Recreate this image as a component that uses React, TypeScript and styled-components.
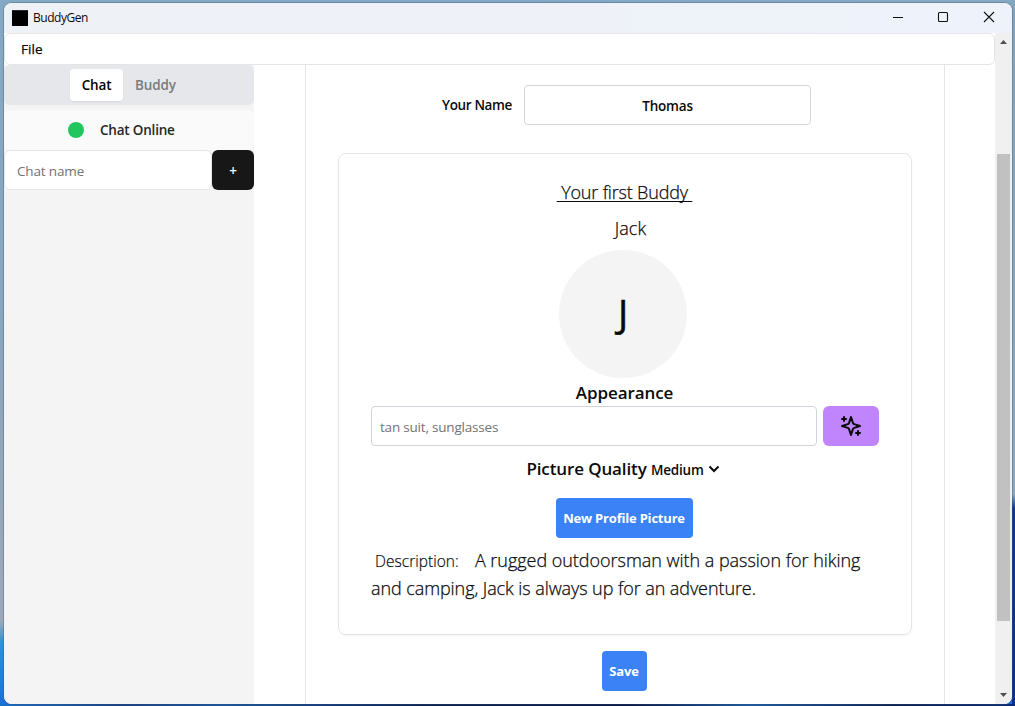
import React from "react";
import styled, { createGlobalStyle } from "styled-components";

const GlobalStyle = createGlobalStyle`
  * { box-sizing: border-box; }
  html, body, #root { height: 100%; margin: 0; }
  body { overflow: hidden; font-family: "Open Sans", "Noto Sans", sans-serif; color: #0a0a0a; }
  button, input { font-family: inherit; margin: 0; }
`;

const Desktop = styled.div`
  height: 706px;
  width: 1015px;
  padding: 3px 3px 2px 4px;
  background:
    linear-gradient(90deg, #1a70cd 0, #173f8c 12%, #1956a5 22%, #0a1f52 42%, #071745 62%, #1c5bab 74%, #0a1e50 88%, #0b2a7a 100%) 0 704px / 100% 2px no-repeat,
    linear-gradient(180deg, #80a5bf 0, #87a9c3 70%, #0b3a92 72%, #063192 100%) 1012px 0 / 3px 100% no-repeat,
    linear-gradient(180deg, #84a9c4 0, #8aa6bf 50%, #9aa8b9 80%, #9ba9bb 88%, #2d92d6 91%, #1b6fd8 100%);
`;

const Window = styled.div`
  height: 701px;
  display: flex;
  flex-direction: column;
  border-radius: 8px;
  overflow: hidden;
  background: #fff;
  box-shadow: 0 0 0 1px rgba(60, 80, 100, 0.35);
`;

const TitleBar = styled.header`
  height: 30px;
  flex: none;
  display: flex;
  align-items: center;
  background: linear-gradient(90deg, #eef1f6, #eef2fa);
  padding-left: 8px;
`;

const AppIcon = styled.div`
  width: 16px;
  height: 16px;
  background: #000;
  border-top: 1px solid #2a2735;
  margin-right: 5px;
`;

const WindowControls = styled.div`
  margin-left: auto;
  display: flex;
  svg { display: block; }
`;

const Body = styled.div`
  flex: 1;
  min-height: 0;
  display: flex;
`;

const Page = styled.div`
  flex: 1;
  display: flex;
  flex-direction: column;
`;

const Label = styled.span<{ $size: number; $weight?: number; $spacing?: number; $color?: string; $line?: number; $stroke?: number }>`
  font-size: ${(p) => p.$size}px;
  font-weight: ${(p) => p.$weight ?? 400};
  letter-spacing: ${(p) => p.$spacing ?? 0}px;
  color: ${(p) => p.$color ?? "inherit"};
  line-height: ${(p) => (p.$line ? `${p.$line}px` : "20px")};
  -webkit-text-stroke: ${(p) => p.$stroke ?? 0}px currentColor;
  white-space: pre;
`;

const MenuBar = styled.nav`
  height: 32px;
  flex: none;
  display: flex;
  align-items: center;
  padding-left: 16px;
  border: 1px solid #e5e5e5;
  border-radius: 6px;
`;

const Columns = styled.div`
  flex: 1;
  min-height: 0;
  display: flex;
`;

const Sidebar = styled.aside`
  width: 250px;
  background: #f4f4f4;
`;

const TabList = styled.div`
  height: 40px;
  display: flex;
  justify-content: center;
  align-items: center;
  border-radius: 6px;
  background: #e5e7eb;
`;

const Tab = styled.button<{ $active?: boolean; $width: number }>`
  width: ${(p) => p.$width}px;
  height: 32px;
  padding: 0;
  border: 0;
  border-radius: 4px;
  background: ${(p) => (p.$active ? "#fff" : "transparent")};
  box-shadow: ${(p) => (p.$active ? "0 1px 2px rgba(0,0,0,0.06)" : "none")};
`;

const Status = styled.div`
  height: 40px;
  margin-top: 5px;
  display: flex;
  align-items: center;
  padding-left: 64px;
  gap: 16px;
  border-radius: 6px;
  background: #fafafa;
`;

const Dot = styled.div`
  width: 16px;
  height: 16px;
  border-radius: 50%;
  background: #22c55e;
`;

const NewChat = styled.div`
  display: flex;
`;

const TextInput = styled.input<{ $pad: number; $radius: number; $border: string; $spacing: number; $center?: boolean }>`
  flex: 1;
  min-width: 0;
  height: 40px;
  padding: 2px ${(p) => p.$pad}px 0;
  border: 1px solid ${(p) => p.$border};
  border-radius: ${(p) => p.$radius}px;
  background: #fff;
  outline: none;
  color: #0a0a0a;
  font-size: 13.5px;
  font-weight: ${(p) => (p.$center ? 600 : 400)};
  letter-spacing: ${(p) => p.$spacing}px;
  text-align: ${(p) => (p.$center ? "center" : "left")};
  &::placeholder { color: #737373; opacity: 1; }
`;

const AddButton = styled.button`
  width: 42px;
  height: 40px;
  padding: 2px 0 0;
  border: 0;
  border-radius: 6px;
  background: #171717;
  color: #fff;
`;

const Main = styled.main`
  flex: 1;
  padding: 0 50px 0 51px;
`;

const Panel = styled.section`
  width: 640px;
  height: 100%;
  border: solid #e5e5e5;
  border-width: 0 1px;
  padding: 20px 32px 0;
`;

const NameRow = styled.label`
  display: flex;
  align-items: center;
  width: 369px;
  margin-left: 104px;
  gap: 12px;
`;

const Card = styled.article`
  height: 482px;
  margin-top: 28px;
  padding: 24px 32px 0;
  border: 1px solid #e5e5e5;
  border-radius: 8px;
  box-shadow: 0 1px 2px rgba(0, 0, 0, 0.05);
  display: flex;
  flex-direction: column;
  align-items: center;
`;

const BuddyTitle = styled.div`
  height: 28px;
  display: flex;
  margin-right: 1px;
  text-decoration: underline;
  text-decoration-thickness: 1px;
  text-underline-offset: 2px;
  text-decoration-skip-ink: none;
`;

const BuddyName = styled.div`
  height: 28px;
  margin: 8px 0;
  padding-left: 11px;
`;

const Avatar = styled.div`
  width: 128px;
  height: 128px;
  flex: none;
  margin-right: 4px;
  padding-bottom: 3px;
  border-radius: 50%;
  background: #f4f4f4;
  display: flex;
  align-items: center;
  justify-content: center;
`;

const AppearanceLabel = styled.div`
  height: 28px;
  padding-top: 1px;
  margin-right: 1px;
`;

const AppearanceRow = styled.div`
  width: 508px;
  display: flex;
  gap: 6px;
`;

const MagicButton = styled.button`
  width: 56px;
  height: 40px;
  padding: 0;
  border: 0;
  border-radius: 6px;
  background: #c084fc;
  display: flex;
  align-items: center;
  justify-content: center;
`;

const QualityRow = styled.div`
  height: 28px;
  margin: 9px 0 15px;
  display: flex;
  align-items: baseline;
  svg { align-self: center; }
`;

const PrimaryButton = styled.button<{ $width: number }>`
  width: ${(p) => p.$width}px;
  height: 40px;
  flex: none;
  margin-right: 2px;
  padding: 0;
  border: 0;
  border-radius: 4px;
  background: #3b82f6;
  color: #fff;
`;

const Description = styled.div`
  width: 508px;
  margin-top: 8px;
  display: flex;
  flex-direction: column;
`;

const DescriptionLine = styled.div`
  height: 28px;
  display: flex;
  align-items: baseline;
`;

const SaveRow = styled.div`
  margin-top: 16px;
  display: flex;
  justify-content: center;
`;

const ScrollBar = styled.div`
  width: 17px;
  background: #f0f0f0;
  display: flex;
  flex-direction: column;
  align-items: center;
  svg { display: block; flex: none; }
`;

const Thumb = styled.div`
  width: 13px;
  height: 467px;
  margin-top: 104px;
  margin-bottom: auto;
  background: #c1c1c1;
`;

const Controls = () => (
  <WindowControls>
    <svg width="126" height="30" viewBox="0 0 126 30" fill="none" stroke="#111" strokeWidth="1.1">
      <path d="M7 14.5h10" />
      <rect x="52.5" y="9.5" width="9" height="9" rx="1" />
      <path d="M98 9l10 10M108 9l-10 10" />
    </svg>
  </WindowControls>
);

const Sparkles = () => (
  <svg width="24" height="24" viewBox="0 0 24 24" fill="none" stroke="#0a0a0a" strokeWidth="2" strokeLinecap="round" strokeLinejoin="round">
    <path d="m12 3-1.912 5.813a2 2 0 0 1-1.275 1.275L3 12l5.813 1.912a2 2 0 0 1 1.275 1.275L12 21l1.912-5.813a2 2 0 0 1 1.275-1.275L21 12l-5.813-1.912a2 2 0 0 1-1.275-1.275L12 3Z" />
    <path d="M5 3v4M19 17v4M3 5h4M17 19h4" />
  </svg>
);

const Arrow = ({ down }: { down?: boolean }) => (
  <svg width="17" height="17" viewBox="0 0 17 17" fill="#505050">
    <path d={down ? "M5 6h7L8.5 10z" : "M5 11h7L8.5 7z"} />
  </svg>
);

export default function App() {
  return (
    <Desktop>
      <GlobalStyle />
      <Window>
        <TitleBar>
          <AppIcon />
          <Label $size={12} $spacing={-0.45}>BuddyGen</Label>
          <Controls />
        </TitleBar>
        <Body>
          <Page>
            <MenuBar>
              <Label $size={13.5} $stroke={0.25} $spacing={0.1}>File</Label>
            </MenuBar>
            <Columns>
              <Sidebar>
                <TabList>
                  <Tab $active $width={53}><Label $size={13.5} $weight={600} $spacing={-0.15}>Chat</Label></Tab>
                  <Tab $width={65}><Label $size={13.5} $weight={600} $spacing={-0.15} $color="#7b7b7d">Buddy</Label></Tab>
                </TabList>
                <Status>
                  <Dot />
                  <Label $size={13.5} $weight={600} $spacing={-0.2} $color="#262626">Chat Online</Label>
                </Status>
                <NewChat>
                  <TextInput placeholder="Chat name" $pad={12} $radius={6} $border="#e5e5e5" $spacing={-0.15} />
                  <AddButton><Label $size={13.5} $weight={600}>+</Label></AddButton>
                </NewChat>
              </Sidebar>
              <Main>
                <Panel>
                  <NameRow>
                    <Label $size={13.5} $weight={600} $spacing={-0.35}>Your Name</Label>
                    <TextInput defaultValue="Thomas" $center $pad={8} $radius={4} $border="#d1d5db" $spacing={-0.2} />
                  </NameRow>
                  <Card>
                    <BuddyTitle><Label $size={18} $weight={300} $stroke={0.25} $spacing={-0.18} $line={28}>{" Your first Buddy "}</Label></BuddyTitle>
                    <BuddyName><Label $size={18} $weight={300} $stroke={0.25} $spacing={0.1} $line={28}>Jack</Label></BuddyName>
                    <Avatar><Label $size={38} $stroke={0.5} $line={48}>J</Label></Avatar>
                    <AppearanceLabel><Label $size={17} $weight={600} $spacing={-0.08} $line={28}>Appearance</Label></AppearanceLabel>
                    <AppearanceRow>
                      <TextInput placeholder="tan suit, sunglasses" $pad={8} $radius={4} $border="#d1d5db" $spacing={-0.2} />
                      <MagicButton aria-label="Enhance"><Sparkles /></MagicButton>
                    </AppearanceRow>
                    <QualityRow>
                      <Label $size={17} $weight={600} $spacing={-0.12} $line={28}>{"Picture Quality "}</Label>
                      <Label $size={13.5} $weight={600} $spacing={-0.2} $line={28}>Medium</Label>
                      <svg width="20" height="16" viewBox="0 0 20 16" fill="none" stroke="#0a0a0a" strokeWidth="2">
                        <path d="M5.500 5.500 10 10l4.500-4.500" />
                      </svg>
                    </QualityRow>
                    <PrimaryButton $width={137}><Label $size={13} $weight={700} $spacing={-0.2}>New Profile Picture</Label></PrimaryButton>
                    <Description>
                      <DescriptionLine>
                        <Label $size={15.5} $weight={300} $stroke={0.2} $spacing={0.02} $line={28}>{" Description:    "}</Label>
                        <Label $size={18} $weight={300} $stroke={0.25} $spacing={-0.03} $line={28}>A rugged outdoorsman with a passion for hiking</Label>
                      </DescriptionLine>
                      <DescriptionLine>
                        <Label $size={18} $weight={300} $stroke={0.25} $spacing={-0.08} $line={28}>and camping, Jack is always up for an adventure.</Label>
                      </DescriptionLine>
                    </Description>
                  </Card>
                  <SaveRow>
                    <PrimaryButton $width={45}><Label $size={13} $weight={700} $spacing={-0.2}>Save</Label></PrimaryButton>
                  </SaveRow>
                </Panel>
              </Main>
            </Columns>
          </Page>
          <ScrollBar>
            <Arrow />
            <Thumb />
            <Arrow down />
          </ScrollBar>
        </Body>
      </Window>
    </Desktop>
  );
}
